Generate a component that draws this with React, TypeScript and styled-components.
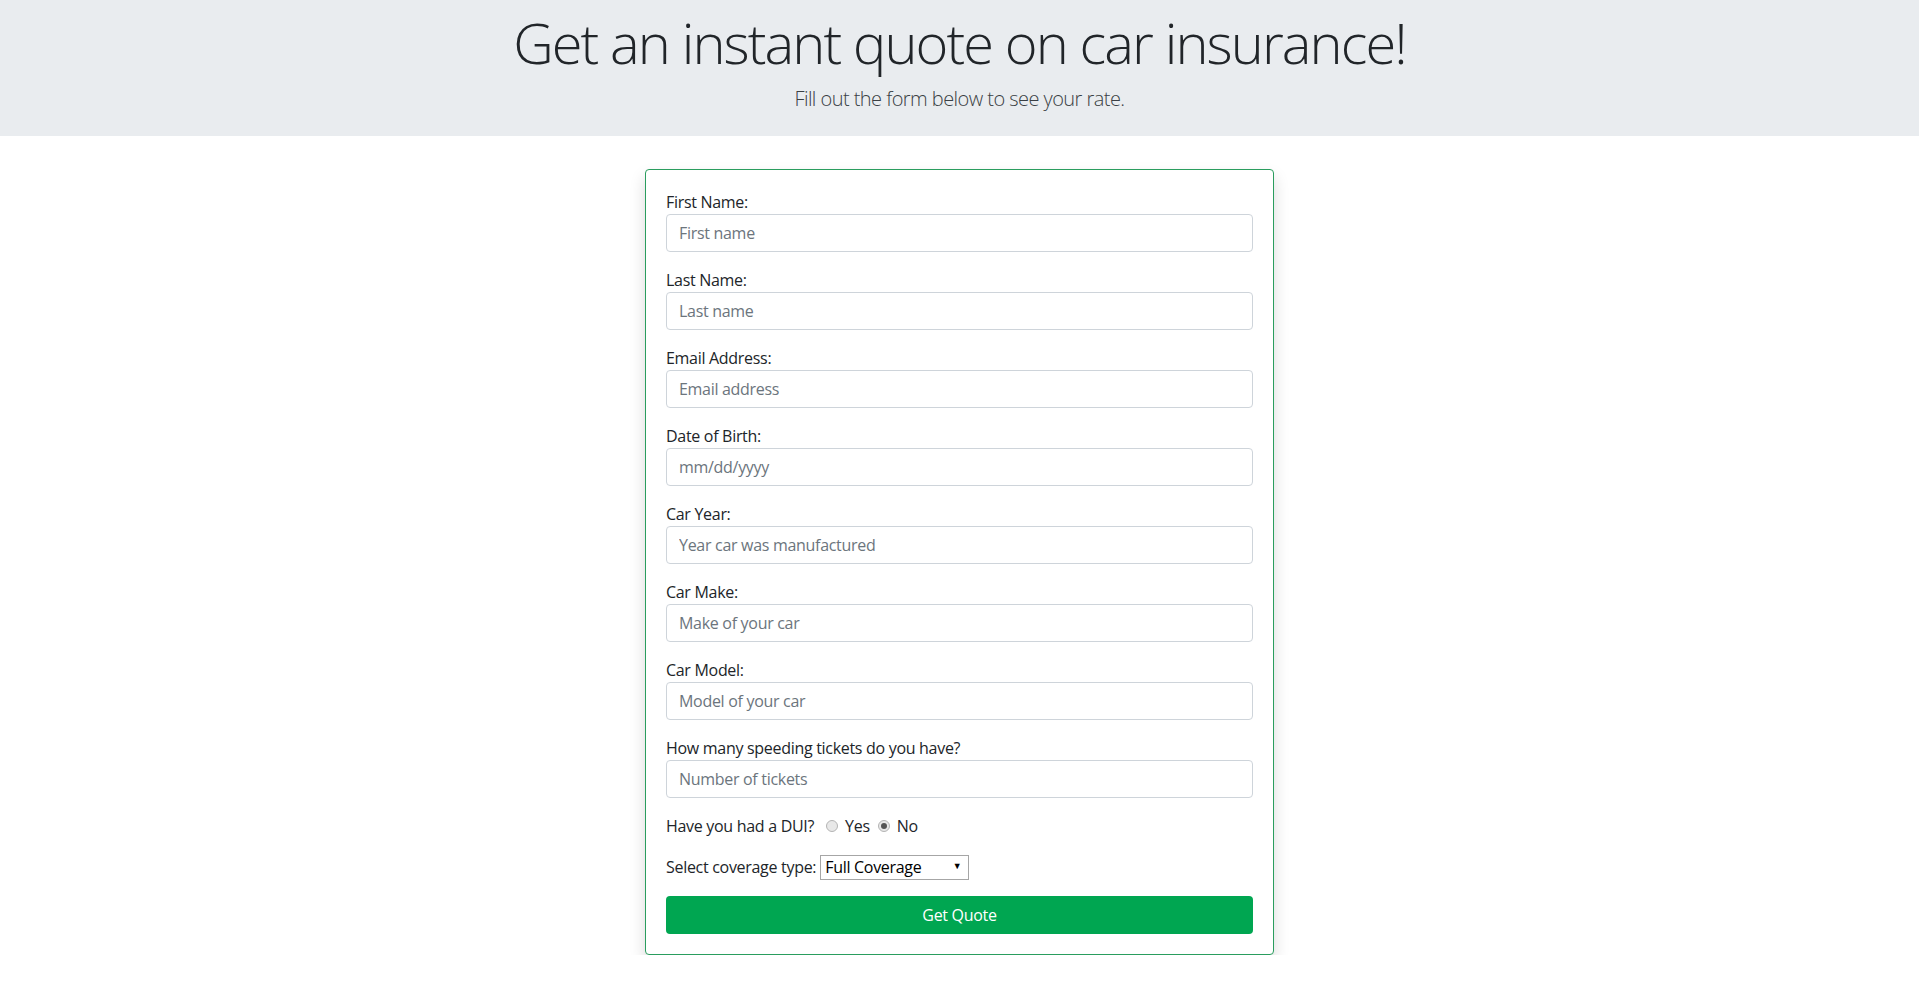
import React from "react";
import styled, { createGlobalStyle } from "styled-components";

const GlobalStyle = createGlobalStyle`
  html, body { margin: 0; padding: 0; background: #ffffff; }
  body {
    font-family: "Open Sans", "Noto Sans", "Liberation Sans", sans-serif;
    color: #212529;
    font-size: 16px;
    letter-spacing: -0.3px;
  }
  * { box-sizing: border-box; }
`;

const Header = styled.header`
  background: #e9ecef;
  height: 136px;
  padding-top: 9px;
  display: flex;
  flex-direction: column;
  align-items: center;
  margin-bottom: 33px;
`;

const Title = styled.h1`
  margin: 0;
  font-size: 56px;
  font-weight: 300;
  line-height: 67px;
  letter-spacing: -1.9px;
  color: #212529;
`;

const Lead = styled.p`
  margin: 8px 0 0;
  font-size: 20px;
  font-weight: 300;
  line-height: 30px;
  letter-spacing: -0.55px;
  color: #3a3f44;
`;

const Card = styled.form`
  width: 629px;
  margin: 0 auto;
  border: 1px solid #2a9d5e;
  border-radius: 4px;
  padding: 20px;
  background: #fff;
  box-shadow: 0 8px 16px rgba(0, 0, 0, 0.15);
  display: flex;
  flex-direction: column;
`;

const Group = styled.div`
  display: flex;
  flex-direction: column;
  margin-bottom: 16px;
`;

const Label = styled.label`
  font-size: 16px;
  line-height: 24px;
`;

const Input = styled.input`
  height: 38px;
  width: 100%;
  padding: 6px 12px;
  font-family: inherit;
  font-size: 16px;
  letter-spacing: inherit;
  line-height: 24px;
  color: #495057;
  border: 1px solid #ced4da;
  border-radius: 4px;
  background: #fff;
  &::placeholder { color: #6c757d; opacity: 1; }
`;

const InlineRow = styled.div`
  display: flex;
  align-items: center;
  height: 24px;
  line-height: 24px;
  margin-bottom: 17px;
`;

const RadioLabel = styled.label`
  display: inline-flex;
  align-items: center;
  margin-left: 6px;
  & + & { margin-left: 2px; }
`;

const Radio = styled.input`
  appearance: none;
  -webkit-appearance: none;
  width: 12px;
  height: 12px;
  margin: 0 7px 0 6px;
  border-radius: 50%;
  border: 1px solid #b4b4b4;
  background: #e8e8e8;
  display: grid;
  place-items: center;
  &:checked::after {
    content: "";
    width: 6px;
    height: 6px;
    border-radius: 50%;
    background: #555;
  }
`;

const SelectWrap = styled.div`
  position: relative;
  margin-left: 4px;
  width: 149px;
  height: 25px;
`;

const Select = styled.select`
  appearance: none;
  -webkit-appearance: none;
  width: 100%;
  height: 25px;
  padding: 0 18px 0 4px;
  font-family: inherit;
  font-size: 16px;
  letter-spacing: inherit;
  color: #000;
  background: #fff;
  border: 1px solid #a6a6a6;
  border-radius: 0;
`;

const Arrow = styled.span`
  position: absolute;
  right: 8px;
  top: 6px;
  font-size: 9px;
  line-height: 10px;
  color: #000;
  pointer-events: none;
`;

const Button = styled.button`
  height: 38px;
  width: 100%;
  border: none;
  border-radius: 4px;
  background: #00a651;
  color: #fff;
  font-family: inherit;
  font-size: 16px;
  letter-spacing: inherit;
  line-height: 24px;
  cursor: pointer;
`;

const fields = [
  ["First Name:", "First name"],
  ["Last Name:", "Last name"],
  ["Email Address:", "Email address"],
  ["Date of Birth:", "mm/dd/yyyy"],
  ["Car Year:", "Year car was manufactured"],
  ["Car Make:", "Make of your car"],
  ["Car Model:", "Model of your car"],
  ["How many speeding tickets do you have?", "Number of tickets"],
];

export default function App() {
  return (
    <>
      <GlobalStyle />
      <Header>
        <Title>Get an instant quote on car insurance!</Title>
        <Lead>Fill out the form below to see your rate.</Lead>
      </Header>
      <Card onSubmit={(e) => e.preventDefault()}>
        {fields.map(([label, ph], i) => (
          <Group key={i}>
            <Label htmlFor={`f${i}`}>{label}</Label>
            <Input id={`f${i}`} type="text" placeholder={ph} />
          </Group>
        ))}
        <InlineRow>
          <span>Have you had a DUI?</span>
          <RadioLabel>
            <Radio type="radio" name="dui" value="yes" />
            Yes
          </RadioLabel>
          <RadioLabel>
            <Radio type="radio" name="dui" value="no" defaultChecked />
            No
          </RadioLabel>
        </InlineRow>
        <InlineRow>
          <span>Select coverage type:</span>
          <SelectWrap>
            <Select defaultValue="full">
              <option value="full">Full Coverage</option>
              <option value="liability">Liability</option>
            </Select>
            <Arrow>▼</Arrow>
          </SelectWrap>
        </InlineRow>
        <Button type="submit">Get Quote</Button>
      </Card>
    </>
  );
}
